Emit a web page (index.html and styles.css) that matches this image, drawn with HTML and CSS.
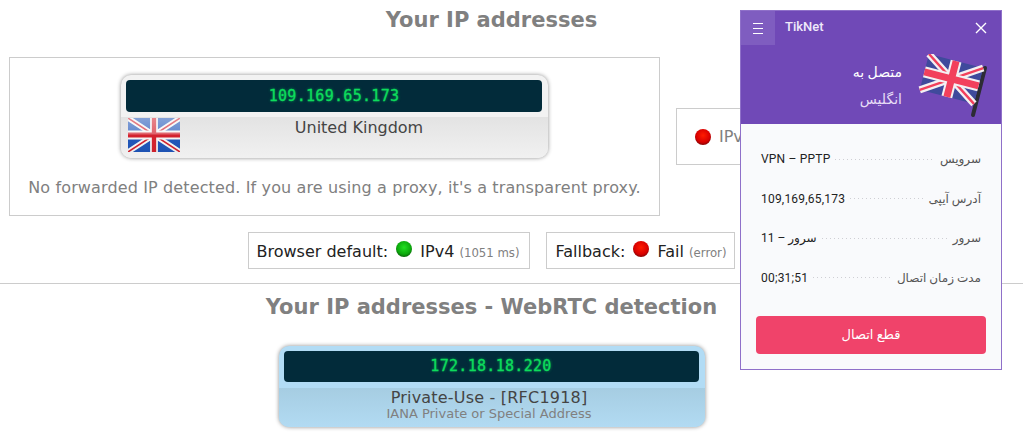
FILE: index.html
```html
<!DOCTYPE html>
<html lang="en">
<head>
    <meta charset="UTF-8">
    <meta name="viewport" content="width=device-width, initial-scale=1.0">
    <title>Your IP addresses</title>
    <link rel="stylesheet" href="styles.css">
</head>
<body>
    <div class="content">
        <h2 class="title">Your IP addresses</h2>
        <div class="ip-row">
            <div class="box box-main">
                <div class="ip-card">
                    <div class="ip-bar">109.169.65.173</div>
                    <div class="ip-info">
                        <svg class="flag-small" viewBox="0 0 60 34" preserveAspectRatio="none">
                            <defs>
                                <linearGradient id="gloss" x1="0" y1="0" x2="0" y2="1">
                                    <stop offset="0" stop-color="#fff" stop-opacity="0.45"/>
                                    <stop offset="0.47" stop-color="#fff" stop-opacity="0.3"/>
                                    <stop offset="0.5" stop-color="#fff" stop-opacity="0"/>
                                    <stop offset="1" stop-color="#000" stop-opacity="0.03"/>
                                </linearGradient>
                            </defs>
                            <rect width="60" height="34" fill="#1f55b8"/>
                            <path d="M0 0L60 34M60 0L0 34" stroke="#f4f4f4" stroke-width="5.5"/>
                            <path d="M0 0L60 34M60 0L0 34" stroke="#d3222e" stroke-width="1.6"/>
                            <path d="M30 0V34M0 17H60" stroke="#f4f4f4" stroke-width="9"/>
                            <path d="M30 0V34M0 17H60" stroke="#d3222e" stroke-width="5"/>
                            <rect width="60" height="34" fill="url(#gloss)"/>
                        </svg>
                        <div class="ip-country">United Kingdom</div>
                    </div>
                </div>
                <p class="forward-note">No forwarded IP detected. If you are using a proxy, it's a transparent proxy.</p>
            </div>
            <div class="box box-side">
                <span class="led led-red"></span>
                <span class="side-text">IPv6</span>
            </div>
        </div>
        <div class="test-row">
            <div class="box test-box">Browser default: <span class="led led-green"></span> IPv4 <small>(1051 ms)</small></div>
            <div class="box test-box">Fallback: <span class="led led-red"></span> Fail <small>(error)</small></div>
        </div>
    </div>
    <hr class="divider">
    <div class="content">
        <h2 class="title title-webrtc">Your IP addresses - WebRTC detection</h2>
        <div class="ip-card ip-card-blue">
            <div class="ip-bar">172.18.18.220</div>
            <div class="ip-info ip-info-blue">
                <div class="ip-country">Private-Use - [RFC1918]</div>
                <div class="ip-sub">IANA Private or Special Address</div>
            </div>
        </div>
    </div>

    <div class="popup">
        <div class="popup-head">
            <div class="popup-top">
                <div class="menu-btn">
                    <svg width="10" height="11" viewBox="0 0 10 11"><path d="M0 .5H10M0 5.5H10M0 10.5H10" stroke="#fff" stroke-width="1"/></svg>
                </div>
                <div class="brand">TikNet</div>
                <svg class="close-btn" width="12" height="12" viewBox="0 0 12 12"><path d="M1 1L11 11M11 1L1 11" stroke="#fff" stroke-width="1.4"/></svg>
            </div>
            <div class="status">
                <div class="status-text" dir="rtl">
                    <div class="status-line">متصل به</div>
                    <div class="status-place">انگلیس</div>
                </div>
                <svg class="flag-big" width="72" height="66" viewBox="0 0 72 66">
                    <path d="M69 14L57 61" stroke="#2c2c34" stroke-width="4" stroke-linecap="round"/>
                    <g transform="translate(13 0) rotate(14.5)">
                        <rect width="56" height="37" fill="#3f4a9c"/>
                        <path d="M0 0L56 37M56 0L0 37" stroke="#f4f0f2" stroke-width="7"/>
                        <path d="M0 0L56 37M56 0L0 37" stroke="#f2405c" stroke-width="2.4"/>
                        <path d="M28 0V37M0 18.5H56" stroke="#f4f0f2" stroke-width="11"/>
                        <path d="M28 0V37M0 18.5H56" stroke="#f2405c" stroke-width="7"/>
                    </g>
                </svg>
            </div>
        </div>
        <div class="popup-body">
            <div class="stat-row"><span class="stat-value">VPN – PPTP</span><span class="stat-dots"></span><span class="stat-label">سرویس</span></div>
            <div class="stat-row"><span class="stat-value">109,169,65,173</span><span class="stat-dots"></span><span class="stat-label">آدرس آیپی</span></div>
            <div class="stat-row"><span class="stat-value">11 – سرور</span><span class="stat-dots"></span><span class="stat-label">سرور</span></div>
            <div class="stat-row"><span class="stat-value">00;31;51</span><span class="stat-dots"></span><span class="stat-label">مدت زمان اتصال</span></div>
            <button class="disconnect-btn">قطع اتصال</button>
        </div>
    </div>
</body>
</html>
```

FILE: styles.css
```css
body {
    font-family: "DejaVu Sans", sans-serif;
    margin: 0;
    height: 442px;
    overflow: hidden;
    background: #fff;
    position: relative;
}
.content {
    width: 983px;
}
.title {
    margin: 0;
    padding-top: 8px;
    font-size: 21px;
    line-height: 25px;
    font-weight: bold;
    text-align: center;
    color: #808080;
}
.ip-row {
    display: flex;
    align-items: center;
    gap: 16px;
    margin-top: 24px;
    padding-left: 9px;
}
.box {
    border: 1px solid #ccc;
    box-sizing: border-box;
    background: #fff;
}
.box-main {
    width: 651px;
    height: 159px;
    padding-top: 17px;
}
.box-side {
    width: 298px;
    height: 57px;
    padding-left: 18px;
    display: flex;
    align-items: center;
    gap: 8px;
    font-size: 16px;
    color: #808080;
}
.ip-card {
    width: 427px;
    height: 83px;
    margin: 0 auto;
    box-sizing: border-box;
    padding-top: 5px;
    border-radius: 10px;
    background: #f2f2f2;
    box-shadow: 0 0 4px rgba(0, 0, 0, 0.45);
    overflow: hidden;
}
.ip-bar {
    height: 32px;
    margin: 0 6px 0 5px;
    border-radius: 4px;
    background: #022b3a;
    color: #0ddc5c;
    font-family: "DejaVu Sans Mono", monospace;
    font-size: 15px;
    line-height: 32px;
    letter-spacing: 0.3px;
    text-align: center;
    text-shadow: 0 0 3px rgba(13, 220, 92, 0.7);
    -webkit-text-stroke: 0.3px #0ddc5c;
}
.ip-info {
    display: flex;
    height: 41px;
    margin-top: 5px;
    padding: 1px 0 0 7px;
    background: linear-gradient(#e3e3e3, #f1f1f1);
}
.flag-small {
    flex: none;
    width: 52px;
    height: 34px;
}
.ip-country {
    flex: 1;
    padding-right: 10px;
    font-size: 16px;
    line-height: 19px;
    text-align: center;
    color: #444;
}
.forward-note {
    margin: 20px 0 0;
    font-size: 16px;
    line-height: 20px;
    letter-spacing: 0.13px;
    text-align: center;
    color: #808080;
}
.test-row {
    display: flex;
    justify-content: center;
    gap: 16px;
    margin-top: 16px;
}
.test-box {
    height: 37px;
    padding: 0 8px;
    font-size: 16px;
    line-height: 37px;
    color: #222;
    white-space: nowrap;
}
.test-box:first-child {
    padding-right: 10px;
}
.test-box small {
    font-size: 11.7px;
    color: #808080;
}
.led {
    display: inline-block;
    width: 16px;
    height: 16px;
    border-radius: 50%;
    vertical-align: 0;
    margin: 0 3px;
}
.led-green {
    background: radial-gradient(circle at 50% 40%, #22e022, #0ca80c 55%, #0a5c0a 80%, #555 100%);
}
.led-red {
    background: radial-gradient(circle at 50% 40%, #ff1c00, #d80000 55%, #7a0505 80%, #555 100%);
}
.box-side .led {
    margin: 0;
}
.divider {
    margin: 14px 0 0;
    border: none;
    border-top: 1px solid #ccc;
}
.title-webrtc {
    padding-top: 11px;
}
.ip-card-blue {
    margin-top: 26px;
    width: 426px;
    height: 81px;
    background: #b2dcf5;
}
.ip-card-blue .ip-bar {
    height: 31px;
    line-height: 31px;
}
.ip-info-blue {
    display: block;
    height: 40px;
    margin-top: 6px;
    padding: 0;
    background: linear-gradient(#a6cde2, #b2dbf3);
}
.ip-info-blue .ip-country {
    padding-right: 5px;
    letter-spacing: 0.2px;
}
.ip-sub {
    padding-right: 5px;
    font-size: 13px;
    line-height: 14px;
    text-align: center;
    color: #808080;
}
.popup {
    position: absolute;
    left: 740px;
    top: 10px;
    width: 262px;
    height: 360px;
    box-sizing: border-box;
    border: 1px solid #8f70c9;
    background: #f9fafc;
    font-family: Roboto, "DejaVu Sans", sans-serif;
}
.popup-head {
    height: 113px;
    background: #7049b7;
    color: #fff;
}
.popup-top {
    display: flex;
    align-items: flex-start;
}
.menu-btn {
    width: 34px;
    height: 34px;
    background: #7f5dc0;
    display: flex;
    align-items: center;
    justify-content: center;
}
.brand {
    flex: 1;
    margin-left: 10px;
    font-size: 13px;
    font-weight: 500;
    line-height: 32px;
    color: #efe9fa;
}
.close-btn {
    margin: 11px 14px 0 0;
}
.status {
    display: flex;
    justify-content: flex-end;
    margin-top: 9px;
    padding-right: 13px;
}
.status-text {
    margin-right: 14px;
    padding-top: 8px;
    text-align: right;
}
.status-line {
    font-size: 14px;
    line-height: 20px;
}
.status-place {
    margin-top: 7px;
    font-size: 14px;
    line-height: 20px;
    color: #e6dcf6;
}
.flag-big {
    flex: none;
}
.popup-body {
    padding: 25px 15px 0;
}
.stat-row {
    display: flex;
    align-items: center;
    gap: 5px;
    height: 20px;
    margin: 0 5px 19.6px;
    font-size: 12px;
}
.stat-value {
    color: #222;
    letter-spacing: 0.2px;
    white-space: nowrap;
}
.stat-dots {
    flex: 1;
    height: 1px;
    background: repeating-linear-gradient(90deg, #cfcfd4 0, #cfcfd4 1px, transparent 1px, transparent 4px);
}
.stat-label {
    color: #555;
    white-space: nowrap;
}
.disconnect-btn {
    display: block;
    width: 230px;
    height: 38px;
    margin-top: 28px;
    border: none;
    border-radius: 4px;
    background: #f0436a;
    color: #fff;
    font-family: Roboto, "DejaVu Sans", sans-serif;
    font-size: 13px;
}
```
